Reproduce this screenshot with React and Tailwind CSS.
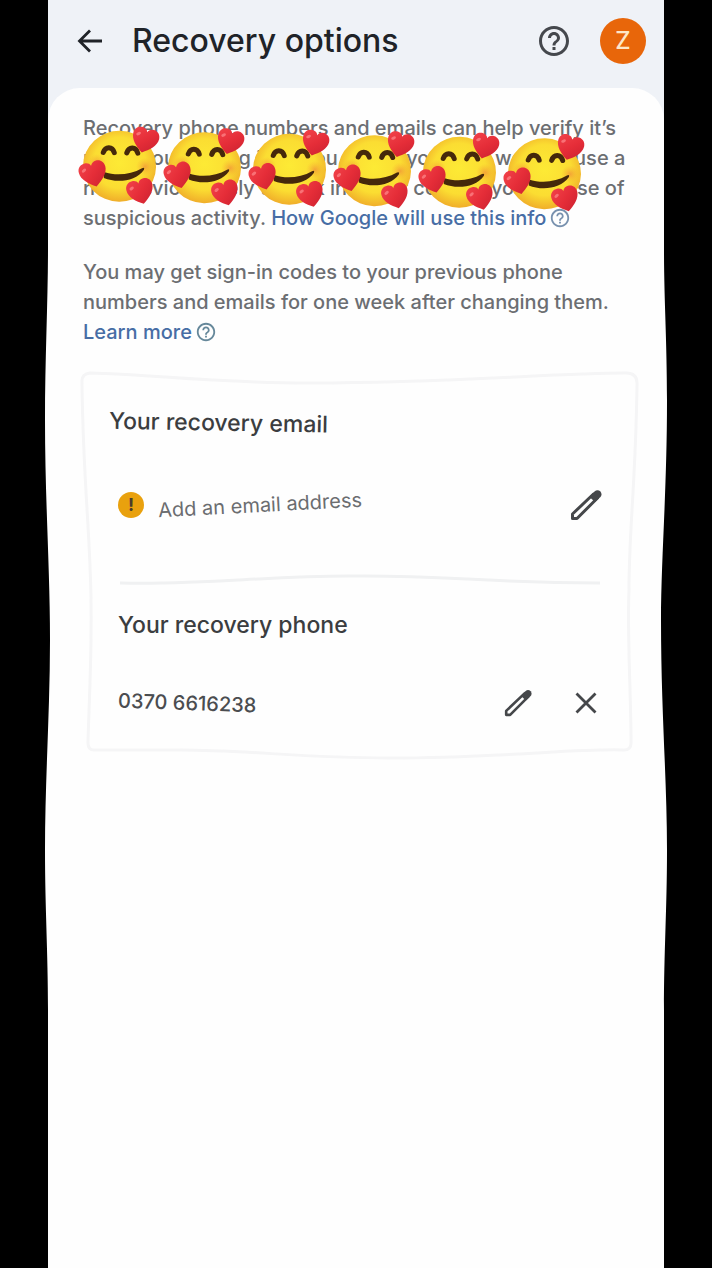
import React from "react";

const HEART =
  "M12 21.500C6.500 18 1.500 13.500 1.500 8C1.500 4 4.500 1.800 7.700 2C10 2.200 11.500 3.200 12 5C13 3 14.500 2 16.700 2C20.200 2 22.500 4.800 22.500 8C22.500 13.500 17.500 18 12 21.500Z";

function HelpIcon({ className }) {
  return (
    <svg viewBox="0 0 24 24" className={className} fill="currentColor" aria-hidden="true">
      <path d="M11 18h2v-2h-2v2zm1-16C6.480 2 2 6.480 2 12s4.480 10 10 10 10-4.480 10-10S17.520 2 12 2zm0 18c-4.410 0-8-3.590-8-8s3.590-8 8-8 8 3.590 8 8-3.590 8-8 8zm0-14c-2.210 0-4 1.790-4 4h2c0-1.100.9-2 2-2s2 .9 2 2c0 2-3 1.750-3 5h2c0-2.250 3-2.500 3-5 0-2.210-1.790-4-4-4z" />
    </svg>
  );
}

function PencilIcon({ className }) {
  return (
    <svg viewBox="0 0 32 32" className={className} aria-hidden="true">
      <path d="M2.500 29.500V25L23.500 5L27.500 9L7 29.500Z" fill="none" stroke="#45474a" strokeWidth="3" strokeLinejoin="round" />
      <path d="M19.500 8L24.500 2.500Q27.500 0 30.500 2.500Q32.500 5.500 30.500 8L25 13Z" fill="#45474a" />
    </svg>
  );
}

function LoveFace() {
  return (
    <svg viewBox="0 0 81 81" className="w-full overflow-visible" aria-hidden="true">
      <defs>
        <radialGradient id="face" cx="0.5" cy="0.45" r="0.55">
          <stop offset="0" stopColor="#fdea35" />
          <stop offset="0.65" stopColor="#fbdd32" />
          <stop offset="1" stopColor="#f0ae2a" />
        </radialGradient>
        <radialGradient id="blush">
          <stop offset="0" stopColor="#ee7d3a" stopOpacity="0.6" />
          <stop offset="1" stopColor="#f5a62f" stopOpacity="0" />
        </radialGradient>
        <linearGradient id="heart" x1="0" y1="0" x2="1" y2="1">
          <stop offset="0" stopColor="#f2434a" />
          <stop offset="0.5" stopColor="#e52d38" />
          <stop offset="1" stopColor="#c9202f" />
        </linearGradient>
      </defs>
      <ellipse cx="39.500" cy="40" rx="36.500" ry="35.500" fill="url(#face)" />
      <circle cx="65" cy="40" r="9" fill="url(#blush)" />
      <circle cx="17" cy="37" r="9" fill="url(#blush)" />
      <g fill="none" stroke="#45280b" strokeLinecap="round" strokeWidth="5">
        <path d="M23 26.500C25 20 32 20 34 26.500" />
        <path d="M46.500 26.500C48.500 20 55.500 20 57.500 26.500" />
      </g>
      <path d="M24 46C37 50 51 48 62 41.500Q65 40 64 43C56 55 37 57 24 52Z" fill="#45280b" />
      <g fill="url(#heart)">
        <path d={HEART} transform="translate(49 -1) rotate(14 16 16) scale(1.270)" />
        <path d={HEART} transform="translate(-2 33) rotate(-16 16 16) scale(1.300)" />
        <path d={HEART} transform="translate(46 50) rotate(-16 16 16) scale(1.270)" />
      </g>
      <g fill="#ff8a8d" opacity="0.7">
        <ellipse cx="58" cy="7" rx="2.500" ry="1.500" transform="rotate(-25 58 7)" />
        <ellipse cx="4" cy="45" rx="2.500" ry="1.500" transform="rotate(-40 4 45)" />
        <ellipse cx="52" cy="62" rx="2.500" ry="1.500" transform="rotate(-40 52 62)" />
      </g>
    </svg>
  );
}

function WavyEdges() {
  return (
    <svg
      viewBox="0 0 712 1268"
      preserveAspectRatio="none"
      className="pointer-events-none absolute inset-0 h-full w-full"
      aria-hidden="true"
    >
      <path
        fill="#fefefe"
        d="M60 200H48V250C48 300 45 360 45 420C45 500 50 570 50 640C50 710 45 780 45 850C45 910 48 950 48 1010V1268H664V1010C664 950 667 910 667 850C667 780 661 710 661 620C661 560 667 490 667 400C667 340 664 300 664 250V200Z"
      />
    </svg>
  );
}

export default function App() {
  return (
    <div className="relative flex min-h-screen flex-col bg-black font-['Inter','Liberation_Sans',sans-serif] font-medium text-[#6c6e72]">
      <div className="mx-12 h-64 bg-[#eff2f7]">
        <div className="h-[88px]" />
        <div className="h-[168px] rounded-t-[32px] bg-[#fefefe]" />
      </div>
      <WavyEdges />

      <div className="absolute inset-x-12 top-0">
        <header className="flex h-[88px] items-center pb-[6px] pl-7 pr-[18px] text-[#202328]">
          <button type="button" aria-label="Back" className="flex">
            <svg viewBox="0 0 28 28" className="w-7" fill="none" stroke="currentColor" strokeWidth="2.800" aria-hidden="true">
              <path d="M26 14H4M14 3.500L3.500 14L14 24.500" />
            </svg>
          </button>
          <h1 className="ml-7 flex-1 whitespace-nowrap text-[32px] leading-10">Recovery options</h1>
          <button type="button" aria-label="Help" className="mr-7 flex text-[#45484d]">
            <HelpIcon className="w-9" />
          </button>
          <button
            type="button"
            aria-label="Account"
            className="flex size-[46px] items-center justify-center rounded-full bg-[#e8660a] text-2xl text-[#fde6c8]"
          >
            Z
          </button>
        </header>

        <main className="pl-8 pr-6 pt-[25px]">
          <div className="relative ml-[3px] whitespace-nowrap text-xl leading-[30px]">
            <p>
              Recovery phone numbers and emails can help verify it’s
              <br />
              really you signing in, if you forgot your pin, we may use a
              <br />
              new device safely to look into it or contact you in case of
              <br />
              suspicious activity.{" "}
              <a href="#info" className="text-[#476da5]">
                How Google will use this info
                <HelpIcon className="mb-1 ml-[3px] inline w-[22px] text-[#7891ae]" />
              </a>
            </p>
            <div className="absolute -left-[3px] top-[17px] flex w-[506px] rotate-1 gap-1">
              {[0, 1, 2, 3, 4, 5].map((n) => (
                <div key={n} className="flex-1">
                  <LoveFace />
                </div>
              ))}
            </div>
          </div>
          <p className="ml-[3px] mt-6 whitespace-nowrap text-xl leading-[30px]">
            You may get sign-in codes to your previous phone
            <br />
            numbers and emails for one week after changing them.
            <br />
            <a href="#learn" className="text-[#476da5]">
              Learn more
              <HelpIcon className="mb-1 ml-[3px] inline w-[22px] text-[#66889a]" />
            </a>
          </p>

          <div className="relative mt-[22px] pb-[42px] pl-[38px] pr-[38px] pt-10">
            <svg
              viewBox="0 0 560 392"
              preserveAspectRatio="none"
              className="pointer-events-none absolute inset-0 h-full w-full"
              fill="none"
              stroke="#f5f5f6"
              strokeWidth="3"
              aria-hidden="true"
            >
              <path d="M2 14Q1 5 10 4C70 5 130 14 230 14C380 14 470 4 546 4Q557 4 557 14C556 110 549 160 549 220C547 270 551 320 551 374Q551 381 544 381C500 379 420 389 310 389C220 389 170 381 100 381L14 381Q8 381 8 374C9 330 12 290 11 230C10 160 3 110 2 14Z" />
              <path d="M40 214C130 216 180 207 270 207C370 206 400 214 520 214" stroke="#f0f1f2" />
            </svg>
            <section className="relative">
              <h2 className="-ml-[9px] rotate-1 text-[23px] leading-8 text-[#3b3d40]">Your recovery email</h2>
              <div className="mt-12 flex items-center justify-between">
                <div className="flex items-center gap-[14px]">
                  <span className="flex size-[26px] items-center justify-center rounded-full bg-[#e9a10e] text-lg font-bold leading-none text-[#493c2b]">
                    !
                  </span>
                  <span className="-rotate-3 text-xl font-normal leading-8 text-[#6b6d70]">Add an email address</span>
                </div>
                <button type="button" aria-label="Edit recovery email" className="flex">
                  <PencilIcon className="w-8" />
                </button>
              </div>
            </section>
            <section className="relative mt-[88px]">
              <h2 className="text-[23px] leading-8 text-[#3b3d40]">Your recovery phone</h2>
              <div className="mt-[46px] flex items-center">
                <span className="flex-1">
                  <span className="inline-block rotate-2 text-xl leading-8 text-[#4b4d50]">0370 6616238</span>
                </span>
                <button type="button" aria-label="Edit recovery phone" className="mr-[42px] flex">
                  <PencilIcon className="w-7" />
                </button>
                <button type="button" aria-label="Remove recovery phone" className="mr-1 flex">
                  <svg viewBox="0 0 24 24" className="w-6" stroke="#45474a" strokeWidth="2.800" aria-hidden="true">
                    <path d="M2.500 2.500L21.500 21.500M21.500 2.500L2.500 21.500" />
                  </svg>
                </button>
              </div>
            </section>
          </div>
        </main>
      </div>
    </div>
  );
}
